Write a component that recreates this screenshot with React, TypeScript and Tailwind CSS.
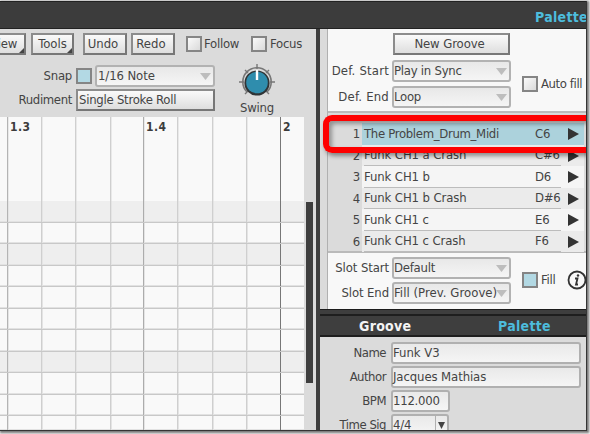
import type { ReactNode } from "react";
import clsx from "clsx";

const columns = [
  { width: "w-[8px]", line: "border-[#b4b4b4]", label: "" },
  { width: "w-[34px]", line: "border-[#cfcfcf]", label: "1.3" },
  { width: "w-[34px]", line: "border-[#cfcfcf]", label: "" },
  { width: "w-[35px]", line: "border-[#cfcfcf]", label: "" },
  { width: "w-[33px]", line: "border-[#acacac]", label: "" },
  { width: "w-[34px]", line: "border-[#cfcfcf]", label: "1.4" },
  { width: "w-[35px]", line: "border-[#cfcfcf]", label: "" },
  { width: "w-[34px]", line: "border-[#cfcfcf]", label: "" },
  { width: "w-[34px]", line: "border-[#777]", label: "" },
  { width: "w-[23px]", line: "border-transparent", label: "2" },
];

const rows = [
  { height: "h-[22px]", shaded: true },
  { height: "h-[21px]", shaded: false },
  { height: "h-[22px]", shaded: true },
  { height: "h-[21px]", shaded: false },
  { height: "h-[22px]", shaded: false },
  { height: "h-[21px]", shaded: false },
  { height: "h-[22px]", shaded: false },
  { height: "h-[21px]", shaded: true },
  { height: "h-[22px]", shaded: false },
  { height: "h-[21px]", shaded: false },
  { height: "h-[15px]", shaded: false },
];

const slots = [
  { name: "The Problem_Drum_Midi", note: "C6", height: "h-[22px]" },
  { name: "Funk CH1 a Crash", note: "C#6", height: "h-[21px]" },
  { name: "Funk CH1 b", note: "D6", height: "h-[22px]" },
  { name: "Funk CH1 b Crash", note: "D#6", height: "h-[21px]" },
  { name: "Funk CH1 c", note: "E6", height: "h-[22px]" },
  { name: "Funk CH1 c Crash", note: "F6", height: "h-[21px]" },
];

function Button({ children, className, menu }: { children: ReactNode; className?: string; menu?: boolean }) {
  return (
    <button
      className={clsx(
        "relative flex h-[22px] shrink-0 items-center border-2 border-[#777] border-t-[#8c8c8c] border-l-[#8c8c8c] bg-linear-to-b from-[#fafafa] to-[#dedede] whitespace-nowrap",
        className
      )}
    >
      {children}
      {menu && (
        <span className="absolute right-0 bottom-0 border-b-[5px] border-l-[5px] border-b-[#444] border-l-transparent" />
      )}
    </button>
  );
}

function Checkbox({ on }: { on?: boolean }) {
  return (
    <span
      className={clsx(
        "h-4 w-4 shrink-0 border-2 border-[#858585]",
        on ? "bg-[#b3d9e4]" : "bg-linear-to-br from-[#fafafa] to-[#dadada]"
      )}
    />
  );
}

function Select({ children, className }: { children: ReactNode; className?: string }) {
  return (
    <div
      className={clsx(
        "flex h-[22px] shrink-0 items-center justify-between rounded-[3px] border-2 border-[#b2b2b2] bg-linear-to-b from-[#e8e8e8] to-[#f5f5f5] pr-0.5 whitespace-nowrap",
        className
      )}
    >
      {children}
      <svg className="-ml-1 h-[7px] w-[11px] shrink-0" viewBox="0 0 11 7">
        <path d="M0 0h11L5.5 7z" fill="#bdbdbd" />
      </svg>
    </div>
  );
}

function Field({ children, className }: { children: ReactNode; className?: string }) {
  return (
    <div
      className={clsx(
        "flex h-[22px] shrink-0 items-center rounded-[3px] border-2 border-[#b0b0b0] bg-linear-to-b from-[#e9e9e9] to-[#f5f5f5] whitespace-nowrap",
        className
      )}
    >
      {children}
    </div>
  );
}

function Knob() {
  return (
    <svg className="h-9 w-9" viewBox="0 0 36 36" fill="none">
      <path
        d="M18 0v5M30 6l-3 3M36 18h-5M30 30l-3-3M6 30l3-3M0 18h5M6 6l3 3"
        stroke="#777"
        strokeWidth="1.4"
      />
      <path d="M8 28A14.2 14.2 0 1 1 28 28" stroke="#777" strokeWidth="1.6" />
      <circle cx="18" cy="19" r="12.6" fill="#303436" />
      <circle cx="18" cy="18.5" r="10.8" fill="#2f8dad" />
      <path d="M18 6v10" stroke="#fff" strokeWidth="2.4" />
    </svg>
  );
}

function Toolbar() {
  return (
    <div className="h-[88px] overflow-hidden pt-1">
      <div className="flex h-[22px] items-center">
        <Button className="-ml-4 w-[42px] justify-end pr-[7px]" menu>View</Button>
        <Button className="ml-[5px] w-[43px] justify-center tracking-normal" menu>Tools</Button>
        <Button className="ml-[9px] w-[44px] justify-center pr-1 tracking-normal">Undo</Button>
        <Button className="ml-1 w-[44px] justify-center pr-1 tracking-normal">Redo</Button>
        <label className="ml-[11px] flex items-center gap-0.5"><Checkbox />Follow</label>
        <label className="ml-auto flex w-[65px] items-center gap-[3px]"><Checkbox />Focus</label>
      </div>
      <div className="flex">
        <div className="w-[215px] pt-[10px]">
          <div className="flex h-[22px] items-center">
            <span className="mr-1 ml-auto">Snap</span>
            <Checkbox on />
            <Select className="ml-[3px] w-[120px] pl-px tracking-[-0.1px]">1/16 Note</Select>
          </div>
          <div className="mt-0.5 flex items-center">
            <span className="mr-1 ml-auto tracking-[-0.35px]">Rudiment</span>
            <Button className="w-[139px] pl-px">Single Stroke Roll</Button>
          </div>
        </div>
        <div className="flex w-[84px] flex-col items-center pt-[9px]">
          <Knob />
          <span className="mt-px leading-[13px]">Swing</span>
        </div>
      </div>
    </div>
  );
}

function PianoGrid() {
  return (
    <div className="flex h-[313px]">
      <div className="w-[304px] bg-[#f9f9f9]">
        <div className="flex h-[84px]">
          {columns.map((column, i) => (
            <div
              key={i}
              className={clsx(
                "shrink-0 border-r pt-[3px] pl-0.5 text-[12px] leading-[15px] font-bold tracking-[0.4px] text-[#3c3c3c]",
                column.width,
                column.line,
                i < 8 && "shadow-[1px_0_#e9e9e9]"
              )}
            >
              {column.label}
            </div>
          ))}
        </div>
        {rows.map((row, i) => (
          <div key={i} className={clsx("flex border-b border-[#c8c8c8] shadow-[0_-1px_#e2e2e2_inset]", row.height, row.shaded && "bg-[#eee]")}>
            {columns.map((column, j) => (
              <div key={j} className={clsx("shrink-0 border-r", column.width, column.line, j < 8 && "shadow-[1px_0_#e4e4e4]")} />
            ))}
          </div>
        ))}
      </div>
      <div className="pt-[85px] pl-0.5">
        <div className="h-[181px] w-[7px] bg-[#3e3e3e]" />
      </div>
    </div>
  );
}

function GrooveDefaults() {
  return (
    <div className="flex h-[84px] border-b-2 border-[#bababa] bg-[#f8f8f8] pt-1">
      <div className="flex w-[183px] shrink-0 flex-col items-end">
        <Button className="mr-px w-[117px] justify-center pr-1 tracking-[-0.1px]">New Groove</Button>
        <div className="mt-[5px] flex items-center gap-[3px]">
          <span className="tracking-[0.2px]">Def. Start</span>
          <Select className="w-[119px]">Play in Sync</Select>
        </div>
        <div className="mt-1 flex items-center gap-[3px]">
          <span className="tracking-[0.2px]">Def. End</span>
          <Select className="w-[119px]">Loop</Select>
        </div>
      </div>
      <label className="mt-[43px] ml-[11px] flex h-4 items-center gap-[3px] whitespace-nowrap">
        <Checkbox />
        <span className="tracking-[-0.4px]">Auto fill</span>
      </label>
    </div>
  );
}

function SlotList() {
  return (
    <div className="relative h-[138px] pt-[10px]">
      {slots.map((slot, i) => (
        <div key={slot.name} className={clsx("flex items-center", slot.height)}>
          <span className="w-[34px] shrink-0 pr-[2px] text-right">{i + 1}</span>
          <div
            className={clsx(
              "flex h-full w-[222px] shrink-0 items-center gap-[7px] pl-0.5",
              i === 0 ? "bg-[#acd2dc]" : i % 2 ? "bg-[#ebebeb]" : "bg-[#f5f5f5]"
            )}
          >
            <div className={clsx("flex h-full w-[197px] shrink-0 items-center border-b", i === 0 ? "border-transparent" : "border-[#bcbcbc]")}>
              <span className={clsx("w-[171px] shrink-0 whitespace-nowrap", i === 0 ? "tracking-[-0.32px]" : "tracking-[-0.1px]")}>
                {slot.name}
              </span>
              <span className="whitespace-nowrap">{slot.note}</span>
            </div>
            <svg className="h-3 w-[11px] shrink-0" viewBox="0 0 11 12">
              <path d="M0 0l11 6-11 6z" fill="#333" />
            </svg>
          </div>
        </div>
      ))}
      {/* highlight round the first slot */}
      <div className="absolute top-0.5 -left-[5px] h-[38px] w-[265px] rounded-l-[9px] border-6 border-r-0 border-[#fe0000] shadow-[2px_3px_4px_#00000066,inset_3px_3px_4px_#00000055]" />
    </div>
  );
}

function SlotSettings() {
  return (
    <div className="flex h-[58px] border-t-2 border-[#bababa] bg-[#f8f8f8] pt-1">
      <div className="flex w-[183px] shrink-0 flex-col items-end gap-[3px]">
        <div className="flex items-center gap-[3px]">
          <span className="tracking-[-0.1px]">Slot Start</span>
          <Select className="w-[119px]">Default</Select>
        </div>
        <div className="flex items-center gap-[3px]">
          <span className="tracking-[-0.1px]">Slot End</span>
          <Select className="w-[119px]">
            <span className="tracking-[0.05px]">Fill (Prev. Groove)</span>
          </Select>
        </div>
      </div>
      <label className="mt-[15px] ml-[11px] flex h-4 w-[45px] shrink-0 items-center gap-[3px]">
        <Checkbox on />
        <span className="tracking-[-0.3px]">Fill</span>
      </label>
      <svg className="mt-[13px] h-5 w-5 shrink-0" viewBox="0 0 20 20" fill="none" stroke="#333">
        <circle cx="10" cy="10" r="8.5" strokeWidth="1.8" />
        <path d="M8 8.5h2.5l-1.5 6h2" strokeWidth="1.8" />
        <circle cx="11" cy="5.5" r="1.2" fill="#333" stroke="none" />
      </svg>
    </div>
  );
}

function FormRow({ label, children }: { label: string; children: ReactNode }) {
  return (
    <div className="flex h-[22px] items-center">
      <span className="mr-[5px] w-[66px] text-right tracking-[-0.5px] whitespace-nowrap">{label}</span>
      {children}
    </div>
  );
}

function GrooveInfo() {
  return (
    <>
      <div className="h-[27px] border-t border-[#1c1c1c] bg-[#3e3e3e] pt-1">
        <div className="flex h-[23px] items-center border-y-2 border-[#1e1e1e] text-[14px] font-bold tracking-[0.3px]">
          <span className="ml-[39px] w-[139px] text-[#f4f4f4]">Groove</span>
          <span className="text-[#4dbcdc]">Palette</span>
        </div>
      </div>
      <div className="flex h-[94px] flex-col gap-0.5 overflow-hidden pt-[6px]">
        <FormRow label="Name"><Field className="w-[190px] tracking-normal">Funk V3</Field></FormRow>
        <FormRow label="Author"><Field className="w-[190px] tracking-[-0.1px]">Jacques Mathias</Field></FormRow>
        <FormRow label="BPM"><Field className="w-[59px]">112.000</Field></FormRow>
        <FormRow label="Time Sig">
          <Field className="w-[58px]">
            4/4
            <span className="ml-auto flex h-full items-center border-l border-[#b0b0b0] px-[2px]">
              <svg className="h-[7px] w-[7px]" viewBox="0 0 7 7">
                <path d="M0 0h7L3.5 7z" fill="#444" />
              </svg>
            </span>
          </Field>
        </FormRow>
      </div>
    </>
  );
}

export default function App() {
  return (
    <div className="h-[434px] w-[590px] overflow-hidden bg-[#f2f2f2] pt-px font-['DejaVu_Sans_Condensed','DejaVu_Sans',sans-serif] text-[13px] leading-4 tracking-[-0.25px] text-[#444]">
      <div className="h-[430px] w-[587px] overflow-hidden border-r border-b border-[#353535] bg-[#dbdbdb] shadow-[1px_1px_2px_1px_#777]">
        <header className="flex h-7 items-center overflow-hidden border-y border-[#222] bg-[#3c3c3c] pt-[3px] pl-[535px] text-[14px] font-bold tracking-[0.3px] text-[#4dbcdc]">
          Palette
        </header>
        <div className="flex h-[401px]">
          <section className="w-[316px]">
            <Toolbar />
            <PianoGrid />
          </section>
          <div className="w-1 bg-[#3e3e3e]" />
          <section className="w-[266px]">
            <div className="ml-[7px] border-l border-[#b0b0b0]">
              <GrooveDefaults />
              <SlotList />
              <SlotSettings />
            </div>
            <GrooveInfo />
          </section>
        </div>
      </div>
    </div>
  );
}
